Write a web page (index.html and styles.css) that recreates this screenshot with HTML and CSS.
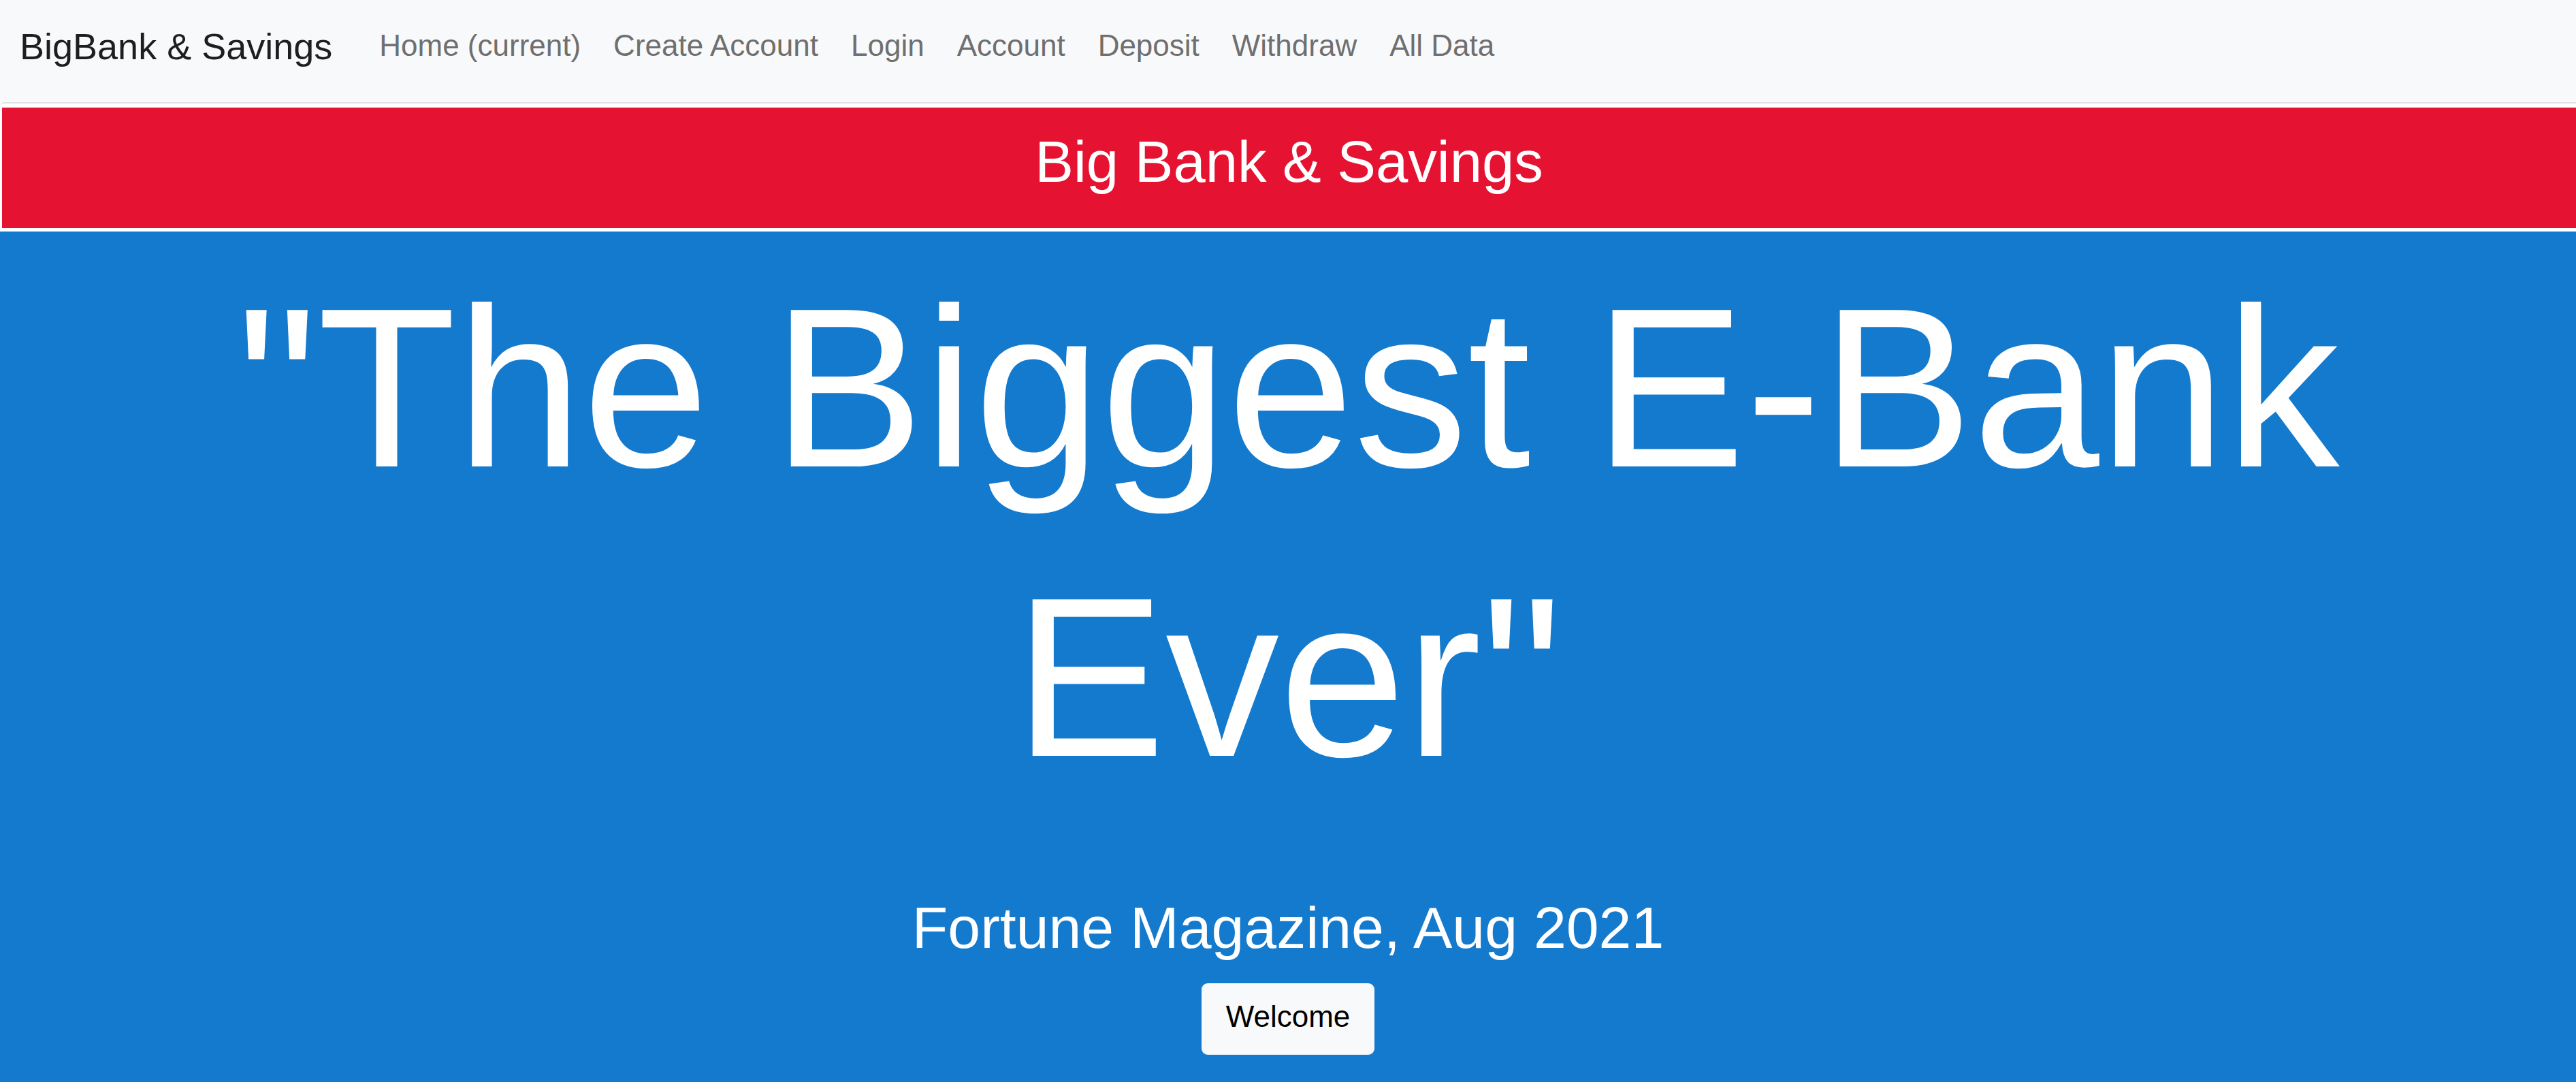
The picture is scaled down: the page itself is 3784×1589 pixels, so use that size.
FILE: index.html
```html
<!DOCTYPE html>
<html lang="en">
<head>
<meta charset="utf-8">
<title>BigBank &amp; Savings</title>
<link rel="stylesheet" href="styles.css">
</head>
<body>
  <nav class="navbar">
    <a class="brand" href="#">BigBank &amp; Savings</a>
    <ul class="nav-links">
      <li><a href="#">Home (current)</a></li>
      <li><a href="#">Create Account</a></li>
      <li><a href="#">Login</a></li>
      <li><a href="#">Account</a></li>
      <li><a href="#">Deposit</a></li>
      <li><a href="#">Withdraw</a></li>
      <li><a href="#">All Data</a></li>
    </ul>
  </nav>
  <div class="card">
    <div class="card-header">Big Bank &amp; Savings</div>
  </div>
  <main class="hero">
    <h1 class="hero-title">"The Biggest E-Bank<br>Ever"</h1>
    <p class="hero-source">Fortune Magazine, Aug 2021</p>
    <button class="btn-welcome" type="button">Welcome</button>
  </main>
</body>
</html>
```

FILE: styles.css
```css
* {
  box-sizing: border-box;
}

html, body {
  margin: 0;
  padding: 0;
}

body {
  font-family: "Liberation Sans", Arial, sans-serif;
  background: #ffffff;
  color: #212529;
}

a {
  text-decoration: none;
}

.navbar {
  display: flex;
  align-items: flex-start;
  height: 150px;
  padding: 41px 0 0 29px;
  background: #f8f9fa;
}

.brand {
  font-size: 54px;
  line-height: 54px;
  color: #1e1e1e;
  white-space: nowrap;
}

.nav-links {
  display: flex;
  gap: 48px;
  list-style: none;
  margin: 4px 0 0 69px;
  padding: 0;
}

.nav-links a {
  display: block;
  font-size: 44px;
  line-height: 44px;
  color: #6f6f6f;
  white-space: nowrap;
}

.card {
  background: #ffffff;
  border-top: 2px solid #dfe1e4;
  border-top-left-radius: 6px;
  padding: 6px 0 5px 3px;
}

.card-header {
  height: 177px;
  padding-top: 37px;
  background: #e51232;
  color: #ffffff;
  text-align: center;
  font-size: 85px;
  line-height: 85px;
}

.hero {
  display: flex;
  flex-direction: column;
  align-items: center;
  background: #147ace;
  color: #ffffff;
  padding: 17px 0 40px;
  text-align: center;
}

.hero-title {
  margin: 0;
  font-size: 334px;
  line-height: 425px;
  font-weight: 400;
  white-space: nowrap;
}

.hero-source {
  margin: 113px 0 0;
  font-size: 86px;
  line-height: 85px;
}

.btn-welcome {
  margin-top: 39px;
  padding: 27px 36px 34px;
  border: 0;
  border-radius: 9px;
  background: #f8f9fa;
  color: #000000;
  font-family: "Liberation Sans", Arial, sans-serif;
  font-size: 44px;
  line-height: 44px;
}
```
